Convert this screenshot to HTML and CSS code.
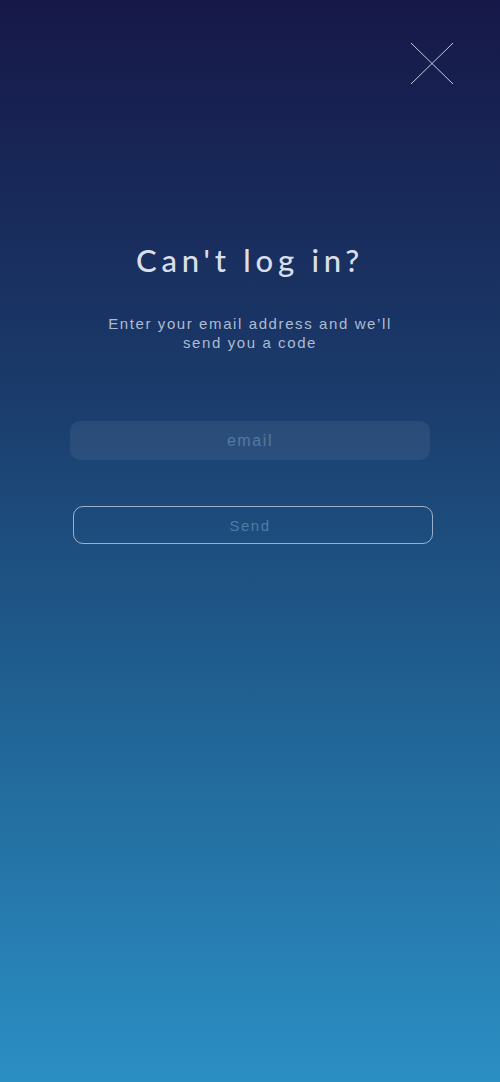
FILE: index.html
```html
<!DOCTYPE html>
<html>
<head>
<meta charset="utf-8">
<link rel="stylesheet" href="styles.css">
</head>
<body>
<div class="screen">
  <div class="topbar">
    <button class="close" aria-label="Close">
      <svg width="44" height="44" viewBox="0 0 44 44"><path d="M1 1 L43 42 M43 1 L1 42" stroke="#c3cadd" stroke-width="1" fill="none"/></svg>
    </button>
  </div>
  <h1 class="title">Can't log in?</h1>
  <p class="subtitle">Enter your email address and we’ll<br>send you a code</p>
  <div class="field">email</div>
  <button class="send">Send</button>
</div>
</body>
</html>
```
FILE: styles.css
```css
html, body { margin: 0; padding: 0; }
body {
  width: 500px;
  height: 1082px;
  background: linear-gradient(to bottom, #161848 0%, #1a3a6a 35%, #1f5b8c 60%, #2b8fc4 100%);
  font-family: "Liberation Sans", Arial, sans-serif;
  overflow: hidden;
}
.screen {
  display: flex;
  flex-direction: column;
  align-items: center;
  height: 1082px;
}
.topbar {
  align-self: stretch;
  display: flex;
  justify-content: flex-end;
  padding: 42px 46px 0 0;
}
.close {
  background: none;
  border: none;
  padding: 0;
  width: 44px;
  height: 44px;
  display: block;
}
.close svg { display: block; }
.title {
  margin: 154px 0 0 0;
  font-family: Lato, "Open Sans", sans-serif;
  font-weight: 500;
  font-size: 31px;
  letter-spacing: 4.8px;
  color: #d9dee9;
  line-height: 40px;
}
.subtitle {
  margin: 34px 0 0 0;
  font-size: 15px;
  line-height: 19px;
  letter-spacing: 1.6px;
  color: #aebbd0;
  text-align: center;
}
.field {
  margin-top: 69px;
  width: 360px;
  height: 39px;
  border-radius: 10px;
  background: rgba(255, 255, 255, 0.065);
  color: #56799e;
  font-size: 16px;
  letter-spacing: 1.6px;
  display: flex;
  align-items: center;
  justify-content: center;
}
.send {
  margin-top: 46px;
  margin-left: 5px;
  width: 360px;
  height: 38px;
  padding: 0 5px 0 0;
  border: 1.5px solid rgba(210, 220, 235, 0.7);
  border-radius: 10px;
  background: transparent;
  color: #4f7ca4;
  font-family: "Liberation Sans", Arial, sans-serif;
  font-size: 15px;
  letter-spacing: 1.5px;
}
```
